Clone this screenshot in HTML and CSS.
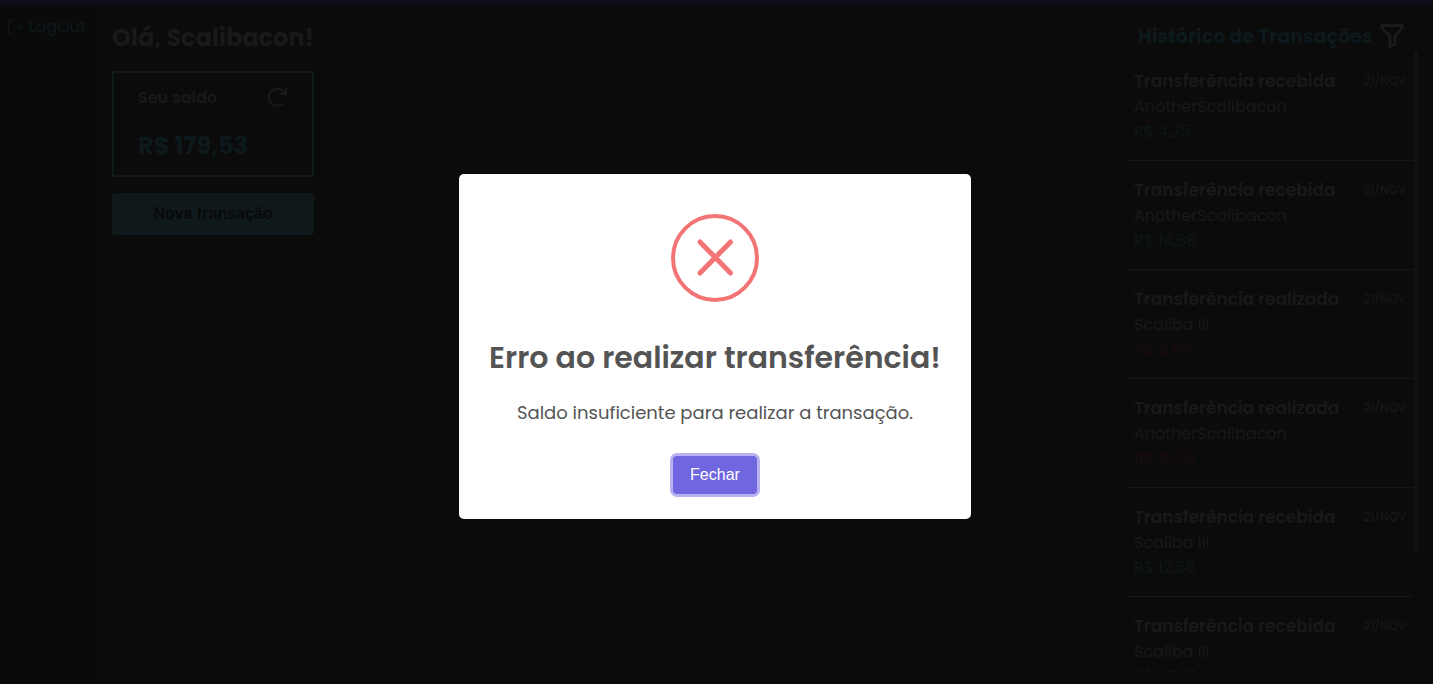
FILE: index.html
```html
<!DOCTYPE html>
<html lang="pt-BR">
<head>
<meta charset="utf-8">
<title>Transações</title>
<link rel="stylesheet" href="styles.css">
</head>
<body>
<div class="page">
  <aside class="sidebar">
    <a class="logout" href="#">
      <svg width="16" height="16" viewBox="0 0 16 16" fill="none" stroke="currentColor"><path d="M6 1.500H.5v13H6M5 8h10M11.500 4.500 15 8l-3.500 3.500"/></svg>
      <span>LogOut</span>
    </a>
  </aside>
  <main class="main">
    <section class="account">
      <h1 class="greeting">Olá, Scalibacon!</h1>
      <div class="balance">
        <div class="balance-head">
          <span class="balance-label">Seu saldo</span>
          <button class="icon-button" type="button" aria-label="Atualizar saldo">
            <svg width="22" height="22" viewBox="0 0 22 22" fill="none" stroke="currentColor" stroke-width="2"><path d="M17 17.500A8.500 8.500 0 1 1 16.500 4.500l3 3M20 2v6h-6"/></svg>
          </button>
        </div>
        <strong class="balance-value">R$ 179,53</strong>
      </div>
      <button class="new-transaction" type="button">Nova transação</button>
    </section>
    <section class="history">
      <header class="history-head">
        <h2 class="history-title">Histórico de Transações</h2>
        <button class="icon-button" type="button" aria-label="Filtrar">
          <svg width="26" height="26" viewBox="0 0 26 26" fill="none" stroke="currentColor" stroke-width="3" stroke-linejoin="round"><path d="M2.500 2.500h21v2l-7.500 8.500v8L11 23.500V13L2.500 4.500z"/></svg>
        </button>
      </header>
      <div class="history-body">
        <ul class="list">
          <li class="item"><div class="row"><h3 class="kind">Transferência recebida</h3><time class="date">21/NOV</time></div><p class="name">AnotherScalibacon</p><p class="amount in">R$ 4,25</p></li>
          <li class="item"><div class="row"><h3 class="kind">Transferência recebida</h3><time class="date">21/NOV</time></div><p class="name">AnotherScalibacon</p><p class="amount in">R$ 14,88</p></li>
          <li class="item"><div class="row"><h3 class="kind">Transferência realizada</h3><time class="date">21/NOV</time></div><p class="name">Scaliba III</p><p class="amount out">R$ 9,99</p></li>
          <li class="item"><div class="row"><h3 class="kind">Transferência realizada</h3><time class="date">21/NOV</time></div><p class="name">AnotherScalibacon</p><p class="amount out">R$ 10,75</p></li>
          <li class="item"><div class="row"><h3 class="kind">Transferência recebida</h3><time class="date">21/NOV</time></div><p class="name">Scaliba III</p><p class="amount in">R$ 12,68</p></li>
          <li class="item"><div class="row"><h3 class="kind">Transferência recebida</h3><time class="date">21/NOV</time></div><p class="name">Scaliba III</p><p class="amount in">R$ 49,91</p></li>
        </ul>
        <div class="rail"><div class="thumb"></div></div>
      </div>
    </section>
  </main>
</div>
<div class="overlay">
  <div class="dialog" role="alertdialog" aria-modal="true" aria-labelledby="dialog-title" aria-describedby="dialog-text">
    <svg class="dialog-icon" width="88" height="88" viewBox="0 0 88 88" fill="none" stroke="currentColor"><circle cx="44" cy="44" r="42" stroke-width="4"/><path d="M29 28 59.500 59M59.500 28 29 59" stroke-width="5" stroke-linecap="round"/></svg>
    <h2 class="dialog-title" id="dialog-title">Erro ao realizar transferência!</h2>
    <p class="dialog-text" id="dialog-text">Saldo insuficiente para realizar a transação.</p>
    <button class="dialog-close" type="button">Fechar</button>
  </div>
</div>
</body>
</html>
```
FILE: styles.css
```css
* { box-sizing: border-box; margin: 0; padding: 0; }
body {
  font-family: Poppins, Inter, sans-serif;
  font-size: 16px;
  color: #191919;
  background: #0b0b0b;
}
.page { display: flex; height: 100vh; border-top: 4px solid #0f0c1b; }
.sidebar { flex: none; width: 96px; padding: 10px 8px; background: #0a0a0a; }
.logout {
  display: flex; align-items: center; gap: 5px;
  line-height: 25px; color: #0d191c; text-decoration: none;
}
.main { flex: 1; display: flex; justify-content: space-between; padding: 16px 15px 12px 16px; }
.account { display: flex; flex-direction: column; gap: 16px; align-self: flex-start; }
.greeting { font-size: 24px; line-height: 35px; font-weight: 700; }
.balance { border: 2px solid #101a1d; padding: 10px 24px; }
.balance-head { display: flex; align-items: center; justify-content: space-between; height: 28px; }
.balance-label { font-weight: 600; }
.balance-value { display: block; margin-top: 16px; font-size: 24px; line-height: 38px; color: #0d191c; }
.icon-button { display: flex; border: 0; background: none; color: #1a1a1a; }
.new-transaction {
  height: 42px; border: 0; border-radius: 4px;
  font: bold 16px "Liberation Sans", Arial, sans-serif;
  color: #090909; background: #0f191c;
}
.history { width: 292px; display: flex; flex-direction: column; min-height: 0; }
.history-head { display: flex; align-items: center; justify-content: space-between; height: 32px; padding: 0 13px 0 12px; }
.history-title { font-size: 19px; font-weight: 700; color: #0d191c; white-space: nowrap; }
.history-body { flex: 1; display: flex; min-height: 0; overflow: hidden; }
.list { flex: 1; list-style: none; }
.item { padding: 16px 8px; border-bottom: 1px solid #0f181b; }
.row { display: flex; justify-content: space-between; align-items: center; white-space: nowrap; }
.kind { font-size: 17px; line-height: 26px; font-weight: 600; }
.date { font-size: 12px; }
.name, .amount { line-height: 25px; }
.in { color: #0b1813; }
.out { color: #1a0c0e; }
.rail { width: 4px; background: #0a0a0a; }
.thumb { height: 81%; background: #0e1214; }
.overlay { position: fixed; inset: 0; display: grid; place-items: center; padding: 9px 3px 0 0; }
.dialog {
  display: flex; flex-direction: column; align-items: center;
  width: 512px; max-width: 100%; padding: 40px 0 25px;
  border-radius: 5px; background: #fff; color: #545454;
}
.dialog-icon { color: #f27474; }
.dialog-title { margin-top: 32px; font-size: 30px; line-height: 48px; font-weight: 600; }
.dialog-text { margin-top: 16px; font-size: 18px; line-height: 30px; }
.dialog-close {
  margin-top: 28px; padding: 10px 17px; border: 0; border-radius: 4px;
  font: 16px/18px "Liberation Sans", Arial, sans-serif;
  color: #fff; background: #7066e0; box-shadow: 0 0 0 3px #b8b3f0;
}
```
